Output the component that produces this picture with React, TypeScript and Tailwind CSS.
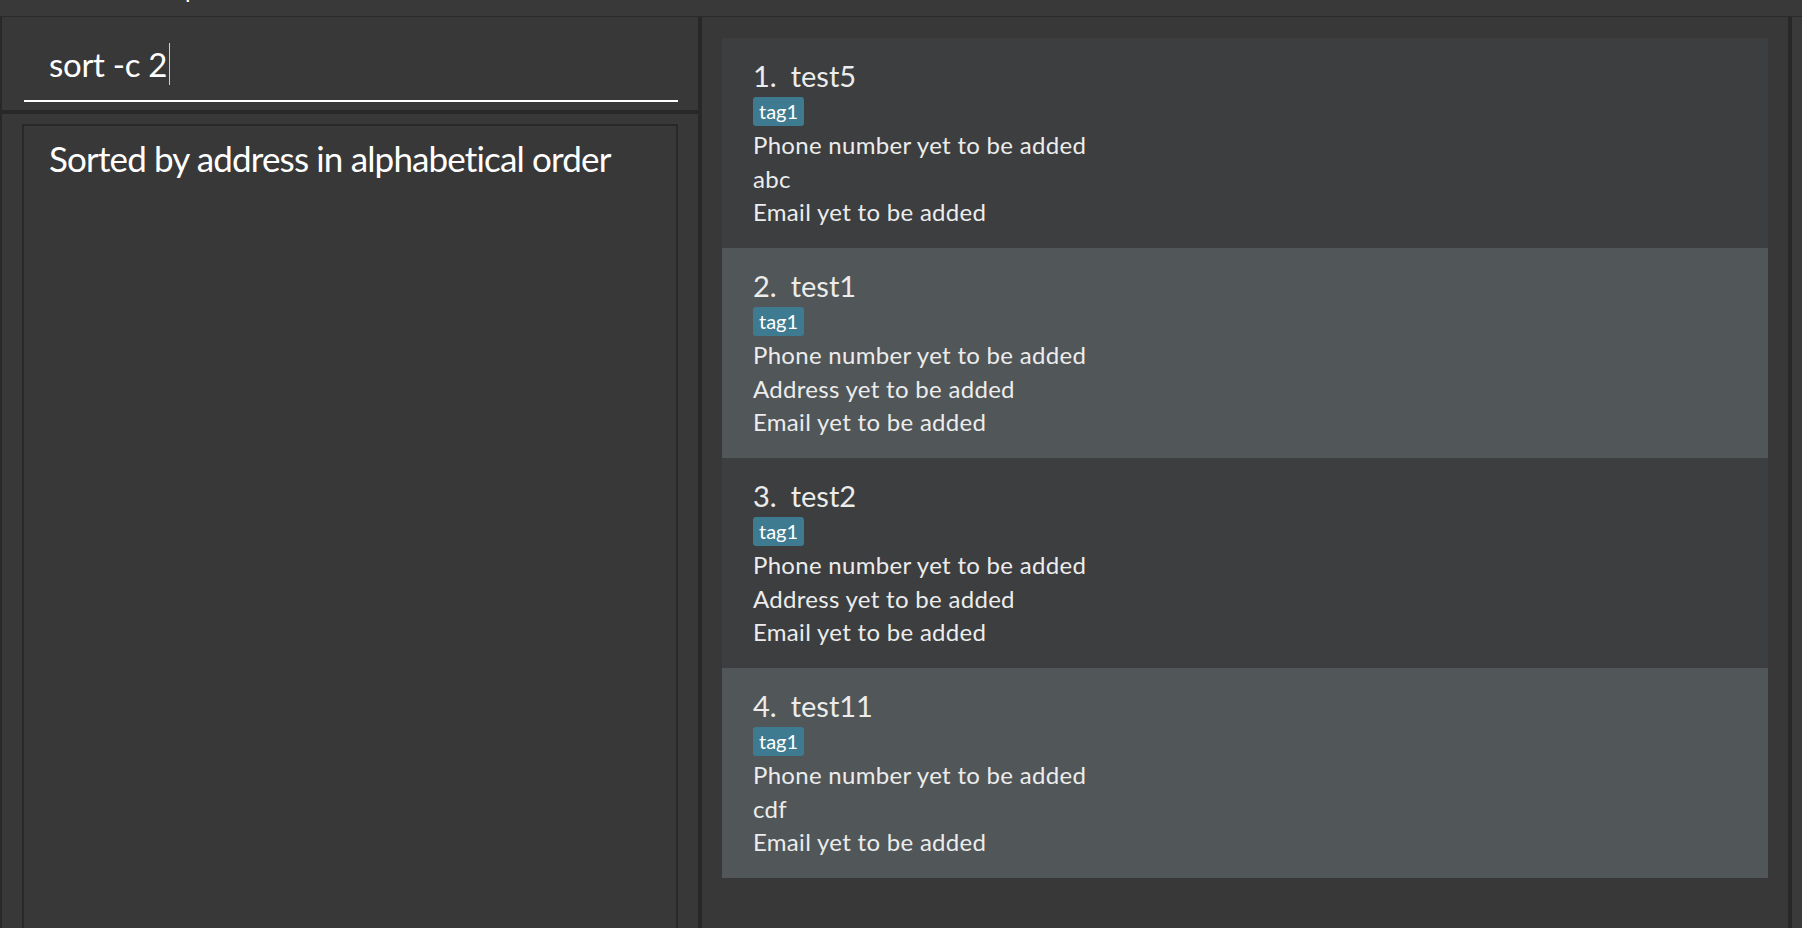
import React from "react";

type Person = {
  name: string;
  tags: string[];
  phone: string;
  address: string;
  email: string;
};

const persons: Person[] = [
  { name: "test5", tags: ["tag1"], phone: "Phone number yet to be added", address: "abc", email: "Email yet to be added" },
  { name: "test1", tags: ["tag1"], phone: "Phone number yet to be added", address: "Address yet to be added", email: "Email yet to be added" },
  { name: "test2", tags: ["tag1"], phone: "Phone number yet to be added", address: "Address yet to be added", email: "Email yet to be added" },
  { name: "test11", tags: ["tag1"], phone: "Phone number yet to be added", address: "cdf", email: "Email yet to be added" },
];

const font = { fontFamily: "Lato, 'Open Sans', sans-serif" };

function PersonCard({ person, index }: { person: Person; index: number }) {
  const odd = index % 2 === 1;
  return (
    <div className={`h-[210px] pl-[31px] pt-[20px] text-[#ececec] ${odd ? "bg-[#515658]" : "bg-[#3c3e3f]"}`}>
      <div className="flex text-[29px] leading-[36px]">
        <span>{index + 1}.</span>
        <span className="ml-[14px]">{person.name}</span>
      </div>
      <div className="mt-[3px] flex gap-[6px]">
        {person.tags.map((t) => (
          <span key={t} className="rounded-[3px] bg-[#3e7b91] px-[6px] py-[2px] text-[20px] leading-[25px] text-white">
            {t}
          </span>
        ))}
      </div>
      <div className="mt-[2px] text-[24px] leading-[33.5px] tracking-[0.3px]">
        <div>{person.phone}</div>
        <div>{person.address}</div>
        <div>{person.email}</div>
      </div>
    </div>
  );
}

export default function App() {
  return (
    <div className="h-[928px] w-[1802px] overflow-hidden bg-[#383838]" style={font}>
      {/* menu bar, cut off at the top */}
      <div className="h-[17px] overflow-hidden border-b border-[#2a2a2a] bg-[#393939]">
        <div className="-mt-[27px] flex text-[24px] leading-[32px] text-white">
          <span className="ml-[103px]">File</span>
          <span className="ml-[8px]">Help</span>
        </div>
      </div>

      <div className="flex h-[911px]">
        {/* left side: command box and result display */}
        <div className="flex w-[698px] flex-col border-l-2 border-[#282828]">
          <div className="h-[93px] pl-[22px] pr-[20px] pt-[26px]">
            <div className="flex items-center pl-[25px] text-[33px] leading-[40px] tracking-[-0.3px] text-white">
              <span>sort -c 2</span>
              <span className="ml-[2px] h-[42px] w-px bg-[#d0d0d0]" />
            </div>
            <div className="mt-[15px] h-[2px] bg-white" />
          </div>
          <div className="h-[4px] bg-[#282828]" />
          <div className="flex flex-1 flex-col px-[20px] pt-[10px]">
            <div className="flex-1 border-2 border-b-0 border-[#282828] pl-[25px] pt-[10px]">
              <div className="text-[35px] leading-[44px] tracking-[-0.85px] text-white">
                Sorted by address in alphabetical order
              </div>
            </div>
          </div>
        </div>

        <div className="w-[4px] bg-[#282828]" />

        {/* person list */}
        <div className="w-[1086px] px-[20px] pt-[21px]">
          {persons.map((p, i) => (
            <PersonCard key={p.name} person={p} index={i} />
          ))}
        </div>

        <div className="w-[4px] bg-[#282828]" />
        <div className="flex-1 bg-[#3a3a3a]" />
      </div>
    </div>
  );
}
